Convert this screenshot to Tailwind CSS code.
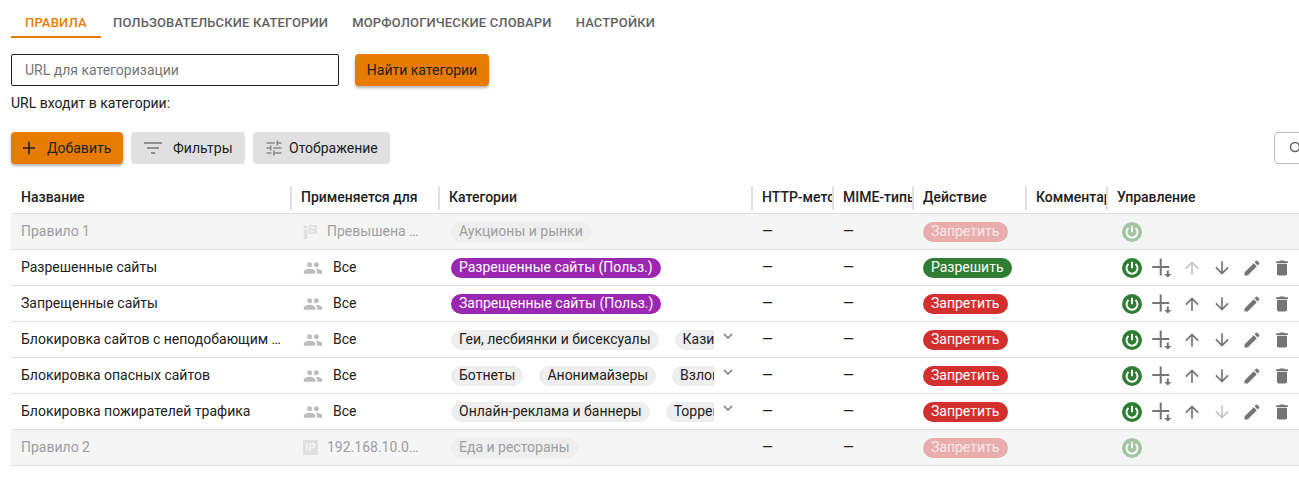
<!DOCTYPE html>
<html lang="ru">
  <head>
    <meta charset="UTF-8" />
    <script src="https://cdn.jsdelivr.net/npm/@tailwindcss/browser@4"></script>
    <title>Правила</title>
  </head>
  <body class="bg-white text-[#212121] font-['Roboto',sans-serif] text-sm overflow-hidden h-[479px]">
    <svg class="hidden">
      <defs>
        <symbol id="people" viewBox="0 0 24 24"><path d="M16 11c1.66 0 2.99-1.34 2.99-3S17.66 5 16 5s-3 1.34-3 3 1.34 3 3 3zm-8 0c1.66 0 2.99-1.34 2.99-3S9.66 5 8 5 5 6.34 5 8s1.34 3 3 3zm0 2c-2.33 0-7 1.17-7 3.5V19h14v-2.5c0-2.33-4.67-3.5-7-3.5zm8 0c-.29 0-.62.02-.97.05 1.16.84 1.97 1.97 1.97 3.45V19h6v-2.5c0-2.33-4.67-3.5-7-3.5z"/></symbol>
        <symbol id="power" viewBox="0 0 20 20"><circle cx="10" cy="10" r="10" fill="#2e7d32"/><path d="M10 3.800v6.400" stroke="#fff" stroke-width="2" fill="none"/><path d="M6.500 6a5.500 5.500 0 1 0 7 0" stroke="#fff" stroke-width="2" fill="none"/></symbol>
        <symbol id="addrow" viewBox="0 0 20 20"><path d="M8.700 0.500v17M0.300 9h17" stroke="currentColor" stroke-width="2" fill="none"/><path d="M14.800 12.500h2v3.400h2.700l-3.700 3.600-3.700-3.600h2.700z" fill="currentColor"/></symbol>
        <symbol id="up" viewBox="0 0 24 24"><path d="M4 12l1.410 1.410L11 7.830V20h2V7.830l5.580 5.590L20 12l-8-8-8 8z"/></symbol>
        <symbol id="down" viewBox="0 0 24 24"><path d="M20 12l-1.410-1.410L13 16.170V4h-2v12.170l-5.580-5.590L4 12l8 8 8-8z"/></symbol>
        <symbol id="edit" viewBox="0 0 24 24"><path d="M3 17.250V21h3.750L17.810 9.940l-3.750-3.750L3 17.250zM20.710 7.040a1 1 0 0 0 0-1.410l-2.340-2.340a1 1 0 0 0-1.410 0l-1.830 1.830 3.750 3.750 1.830-1.830z"/></symbol>
        <symbol id="trash" viewBox="0 0 24 24"><path d="M6 19c0 1.100.9 2 2 2h8c1.100 0 2-.9 2-2V7H6v12zM19 4h-3.500l-1-1h-5l-1 1H5v2h14V4z"/></symbol>
        <symbol id="chevron" viewBox="0 0 24 24"><path d="M7.410 8.590L12 13.170l4.590-4.580L18 10l-6 6-6-6z"/></symbol>
      </defs>
    </svg>

    <!-- tabs -->
    <nav class="flex pl-[11px] h-[38px] text-[13px] font-medium tracking-[0.15px] uppercase text-[#616161]">
      <a class="px-[14px] pt-[14px] w-[90px] border-b-2 border-[#e87c03] text-[#e87c03]">Правила</a>
      <a class="pl-3 pr-3 pt-[14px]">Пользовательские категории</a>
      <a class="pl-3 pr-3 pt-[14px]">Морфологические словари</a>
      <a class="pl-3 pt-[14px]">Настройки</a>
    </nav>

    <!-- url search -->
    <div class="flex gap-4 ml-[11px] mt-4">
      <div class="w-[328px] h-8 border border-[#212121] rounded-[2px] pl-[13px] leading-[30px] text-[#757575]">URL для категоризации</div>
      <button class="w-[134px] h-8 rounded-[4px] bg-[#e87c03] shadow-[0_2px_3px_rgba(0,0,0,0.3)] leading-[30px]">Найти категории</button>
    </div>
    <p class="ml-[11px] mt-2 leading-[18px]">URL входит в категории:</p>

    <!-- toolbar -->
    <div class="relative flex gap-2 ml-[11px] mt-5 h-8">
      <button class="flex items-center w-[112px] h-8 rounded-[4px] bg-[#e87c03] shadow-[0_2px_3px_rgba(0,0,0,0.3)]">
        <svg class="w-[14px] h-[14px] ml-[11px]" viewBox="0 0 14 14"><path d="M7 1v12M1 7h12" stroke="#212121" stroke-width="1.700"/></svg>
        <span class="ml-[11px]">Добавить</span>
      </button>
      <button class="flex items-center w-[114px] h-8 rounded-[4px] bg-[#e0e0e0]">
        <svg class="w-[18px] h-3 ml-[13px]" viewBox="0 0 18 12"><path d="M0 1h18M3 6h12M7 11h4" stroke="#757575" stroke-width="1.500"/></svg>
        <span class="ml-[11px]">Фильтры</span>
      </button>
      <button class="flex items-center w-[137px] h-8 rounded-[4px] bg-[#e0e0e0]">
        <svg class="w-5 h-5 ml-[11px] text-[#8a8a8a] fill-current" viewBox="0 0 24 24"><path d="M3 17v2h6v-2H3zM3 5v2h10V5H3zm10 16v-2h8v-2h-8v-2h-2v6h2zM7 9v2H3v2h4v2h2V9H7zm14 4v-2H11v2h10zm-6-4h2V7h4V5h-4V3h-2v6z"/></svg>
        <span class="ml-[5px]">Отображение</span>
      </button>
      <div class="absolute left-[1263px] top-0 w-[60px] h-8 border border-[#bdbdbd] rounded-[4px]">
        <svg class="w-[14px] h-[14px] ml-[14px] mt-[8px]" viewBox="0 0 14 14"><circle cx="6" cy="6" r="4.500" stroke="#616161" stroke-width="1.500" fill="none"/></svg>
      </div>
    </div>

    <!-- table -->
    <div class="ml-[11px] mt-[14px] w-[1288px]">
      <div class="flex h-[36px] pt-2 border-b border-[#e0e0e0] font-medium items-start leading-[22px]">
        <div class="w-[279px] pl-[10px]">Название</div>
        <div class="w-[148px] h-6 border-l-2 border-[#e0e0e0] pl-[9px] overflow-hidden whitespace-nowrap">Применяется для</div>
        <div class="w-[313px] h-6 border-l-2 border-[#e0e0e0] pl-[9px]">Категории</div>
        <div class="w-[81px] h-6 border-l-2 border-[#e0e0e0] pl-[9px] overflow-hidden whitespace-nowrap">HTTP-методы</div>
        <div class="w-[80px] h-6 border-l-2 border-[#e0e0e0] pl-[9px] overflow-hidden whitespace-nowrap">MIME-типы</div>
        <div class="w-[113px] h-6 border-l-2 border-[#e0e0e0] pl-[9px]">Действие</div>
        <div class="w-[81px] h-6 border-l-2 border-[#e0e0e0] pl-[9px] overflow-hidden whitespace-nowrap">Комментарий</div>
        <div class="h-6 border-l-2 border-[#e0e0e0] pl-[9px]">Управление</div>
      </div>

      <!-- Правило 1 (disabled) -->
      <div class="flex h-[36px] pt-2 border-b border-[#e0e0e0] bg-[#f5f5f5] items-start leading-[18px]">
        <div class="w-[280px] pl-[10px] text-[#9e9e9e]">Правило 1</div>
        <div class="w-[148px] h-5 flex items-start pl-[12px] text-[#9e9e9e]">
          <svg class="w-[14px] h-4 mt-[2px] text-[#e0e0e0] fill-current" viewBox="0 0 14 16"><circle cx="2.500" cy="3" r="1.800"/><path d="M0.500 6h4v9h-3.500zM5.500 1H14v9H5.500zM7 3v1.500h5V3zM8 6v3l3-1.500z"/></svg>
          <span class="ml-[10px]">Превышена …</span>
        </div>
        <div class="w-[313px] pl-[12px]"><span class="inline-block h-5 px-2 rounded-full bg-[#eeeeee] text-[#9e9e9e]">Аукционы и рынки</span></div>
        <div class="w-[81px] pl-[10px]">—</div>
        <div class="w-[80px] pl-[10px]">—</div>
        <div class="w-[113px] pl-[10px]"><span class="inline-block h-5 px-2 w-[85px] rounded-full bg-[#eaadad] text-[#fbeaea]">Запретить</span></div>
        <div class="w-[81px]"></div>
        <div class="pl-[15px] flex"><svg class="w-5 h-5 opacity-40"><use href="#power" /></svg></div>
      </div>

      <!-- Разрешенные сайты -->
      <div class="flex h-[36px] pt-2 border-b border-[#e0e0e0] items-start leading-[18px]">
        <div class="w-[280px] pl-[10px]">Разрешенные сайты</div>
        <div class="w-[148px] h-5 flex items-start pl-[12px]">
          <svg class="w-5 h-5 text-[#bdbdbd] fill-current"><use href="#people" /></svg>
          <span class="ml-[10px]">Все</span>
        </div>
        <div class="w-[313px] pl-[12px]"><span class="inline-block h-5 px-2 rounded-full bg-[#9c27b0] text-white">Разрешенные сайты (Польз.)</span></div>
        <div class="w-[81px] pl-[10px]">—</div>
        <div class="w-[80px] pl-[10px]">—</div>
        <div class="w-[113px] pl-[10px]"><span class="inline-block h-5 px-2 rounded-full bg-[#2e7d32] text-white">Разрешить</span></div>
        <div class="w-[81px]"></div>
        <div class="pl-[15px] flex gap-[10px] text-[#757575] fill-current">
          <svg class="w-5 h-5"><use href="#power" /></svg>
          <svg class="w-5 h-5"><use href="#addrow" /></svg>
          <svg class="w-5 h-5 opacity-40"><use href="#up" /></svg>
          <svg class="w-5 h-5"><use href="#down" /></svg>
          <svg class="w-5 h-5"><use href="#edit" /></svg>
          <svg class="w-5 h-5"><use href="#trash" /></svg>
        </div>
      </div>

      <!-- Запрещенные сайты -->
      <div class="flex h-[36px] pt-2 border-b border-[#e0e0e0] items-start leading-[18px]">
        <div class="w-[280px] pl-[10px]">Запрещенные сайты</div>
        <div class="w-[148px] h-5 flex items-start pl-[12px]">
          <svg class="w-5 h-5 text-[#bdbdbd] fill-current"><use href="#people" /></svg>
          <span class="ml-[10px]">Все</span>
        </div>
        <div class="w-[313px] pl-[12px]"><span class="inline-block h-5 px-2 rounded-full bg-[#9c27b0] text-white">Запрещенные сайты (Польз.)</span></div>
        <div class="w-[81px] pl-[10px]">—</div>
        <div class="w-[80px] pl-[10px]">—</div>
        <div class="w-[113px] pl-[10px]"><span class="inline-block h-5 px-2 w-[85px] rounded-full bg-[#d32f2f] text-white">Запретить</span></div>
        <div class="w-[81px]"></div>
        <div class="pl-[15px] flex gap-[10px] text-[#757575] fill-current">
          <svg class="w-5 h-5"><use href="#power" /></svg>
          <svg class="w-5 h-5"><use href="#addrow" /></svg>
          <svg class="w-5 h-5"><use href="#up" /></svg>
          <svg class="w-5 h-5"><use href="#down" /></svg>
          <svg class="w-5 h-5"><use href="#edit" /></svg>
          <svg class="w-5 h-5"><use href="#trash" /></svg>
        </div>
      </div>

      <!-- Блокировка сайтов с неподобающим -->
      <div class="flex h-[36px] pt-2 border-b border-[#e0e0e0] items-start leading-[18px]">
        <div class="w-[280px] pl-[10px] whitespace-nowrap">Блокировка сайтов с неподобающим …</div>
        <div class="w-[148px] h-5 flex items-start pl-[12px]">
          <svg class="w-5 h-5 text-[#bdbdbd] fill-current"><use href="#people" /></svg>
          <span class="ml-[10px]">Все</span>
        </div>
        <div class="w-[313px] pl-[12px] flex items-start">
          <div class="w-[263px] flex gap-4 overflow-hidden whitespace-nowrap">
            <span class="inline-block h-5 px-2 rounded-full bg-[#eeeeee]">Геи, лесбиянки и бисексуалы</span>
            <span class="inline-block h-5 px-2 rounded-full bg-[#eeeeee]">Казино</span>
          </div>
          <svg class="w-[18px] h-[18px] ml-[5px] -mt-[3px] shrink-0 text-[#757575] fill-current"><use href="#chevron" /></svg>
        </div>
        <div class="w-[81px] pl-[10px]">—</div>
        <div class="w-[80px] pl-[10px]">—</div>
        <div class="w-[113px] pl-[10px]"><span class="inline-block h-5 px-2 w-[85px] rounded-full bg-[#d32f2f] text-white">Запретить</span></div>
        <div class="w-[81px]"></div>
        <div class="pl-[15px] flex gap-[10px] text-[#757575] fill-current">
          <svg class="w-5 h-5"><use href="#power" /></svg>
          <svg class="w-5 h-5"><use href="#addrow" /></svg>
          <svg class="w-5 h-5"><use href="#up" /></svg>
          <svg class="w-5 h-5"><use href="#down" /></svg>
          <svg class="w-5 h-5"><use href="#edit" /></svg>
          <svg class="w-5 h-5"><use href="#trash" /></svg>
        </div>
      </div>

      <!-- Блокировка опасных сайтов -->
      <div class="flex h-[36px] pt-2 border-b border-[#e0e0e0] items-start leading-[18px]">
        <div class="w-[280px] pl-[10px]">Блокировка опасных сайтов</div>
        <div class="w-[148px] h-5 flex items-start pl-[12px]">
          <svg class="w-5 h-5 text-[#bdbdbd] fill-current"><use href="#people" /></svg>
          <span class="ml-[10px]">Все</span>
        </div>
        <div class="w-[313px] pl-[12px] flex items-start">
          <div class="w-[263px] flex gap-4 overflow-hidden whitespace-nowrap">
            <span class="inline-block h-5 px-2 rounded-full bg-[#eeeeee]">Ботнеты</span>
            <span class="inline-block h-5 px-2 rounded-full bg-[#eeeeee]">Анонимайзеры</span>
            <span class="inline-block h-5 px-2 rounded-full bg-[#eeeeee]">Взлом</span>
          </div>
          <svg class="w-[18px] h-[18px] ml-[5px] -mt-[3px] shrink-0 text-[#757575] fill-current"><use href="#chevron" /></svg>
        </div>
        <div class="w-[81px] pl-[10px]">—</div>
        <div class="w-[80px] pl-[10px]">—</div>
        <div class="w-[113px] pl-[10px]"><span class="inline-block h-5 px-2 w-[85px] rounded-full bg-[#d32f2f] text-white">Запретить</span></div>
        <div class="w-[81px]"></div>
        <div class="pl-[15px] flex gap-[10px] text-[#757575] fill-current">
          <svg class="w-5 h-5"><use href="#power" /></svg>
          <svg class="w-5 h-5"><use href="#addrow" /></svg>
          <svg class="w-5 h-5"><use href="#up" /></svg>
          <svg class="w-5 h-5"><use href="#down" /></svg>
          <svg class="w-5 h-5"><use href="#edit" /></svg>
          <svg class="w-5 h-5"><use href="#trash" /></svg>
        </div>
      </div>

      <!-- Блокировка пожирателей трафика -->
      <div class="flex h-[36px] pt-2 border-b border-[#e0e0e0] items-start leading-[18px]">
        <div class="w-[280px] pl-[10px]">Блокировка пожирателей трафика</div>
        <div class="w-[148px] h-5 flex items-start pl-[12px]">
          <svg class="w-5 h-5 text-[#bdbdbd] fill-current"><use href="#people" /></svg>
          <span class="ml-[10px]">Все</span>
        </div>
        <div class="w-[313px] pl-[12px] flex items-start">
          <div class="w-[263px] flex gap-4 overflow-hidden whitespace-nowrap">
            <span class="inline-block h-5 px-2 rounded-full bg-[#eeeeee]">Онлайн-реклама и баннеры</span>
            <span class="inline-block h-5 px-2 rounded-full bg-[#eeeeee]">Торренты</span>
          </div>
          <svg class="w-[18px] h-[18px] ml-[5px] -mt-[3px] shrink-0 text-[#757575] fill-current"><use href="#chevron" /></svg>
        </div>
        <div class="w-[81px] pl-[10px]">—</div>
        <div class="w-[80px] pl-[10px]">—</div>
        <div class="w-[113px] pl-[10px]"><span class="inline-block h-5 px-2 w-[85px] rounded-full bg-[#d32f2f] text-white">Запретить</span></div>
        <div class="w-[81px]"></div>
        <div class="pl-[15px] flex gap-[10px] text-[#757575] fill-current">
          <svg class="w-5 h-5"><use href="#power" /></svg>
          <svg class="w-5 h-5"><use href="#addrow" /></svg>
          <svg class="w-5 h-5"><use href="#up" /></svg>
          <svg class="w-5 h-5 opacity-40"><use href="#down" /></svg>
          <svg class="w-5 h-5"><use href="#edit" /></svg>
          <svg class="w-5 h-5"><use href="#trash" /></svg>
        </div>
      </div>

      <!-- Правило 2 (disabled) -->
      <div class="flex h-[36px] pt-2 border-b border-[#e0e0e0] bg-[#f5f5f5] items-start leading-[18px]">
        <div class="w-[280px] pl-[10px] text-[#9e9e9e]">Правило 2</div>
        <div class="w-[148px] h-5 flex items-start pl-[12px] text-[#9e9e9e]">
          <span class="w-[15px] h-[15px] mt-[2px] bg-[#e0e0e0] text-[#f5f5f5] text-[11px] leading-[15px] font-bold text-center">IP</span>
          <span class="ml-[9px]">192.168.10.0…</span>
        </div>
        <div class="w-[313px] pl-[12px]"><span class="inline-block h-5 px-2 rounded-full bg-[#eeeeee] text-[#9e9e9e]">Еда и рестораны</span></div>
        <div class="w-[81px] pl-[10px]">—</div>
        <div class="w-[80px] pl-[10px]">—</div>
        <div class="w-[113px] pl-[10px]"><span class="inline-block h-5 px-2 w-[85px] rounded-full bg-[#eaadad] text-[#fbeaea]">Запретить</span></div>
        <div class="w-[81px]"></div>
        <div class="pl-[15px] flex"><svg class="w-5 h-5 opacity-40"><use href="#power" /></svg></div>
      </div>
    </div>
  </body>
</html>
